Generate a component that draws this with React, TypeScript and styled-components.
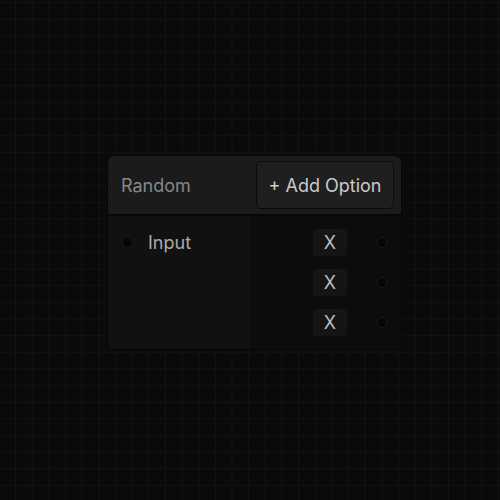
import React from "react";
import styled, { createGlobalStyle } from "styled-components";

const GlobalStyle = createGlobalStyle`
  html, body {
    margin: 0;
    padding: 0;
    background: #0a0a0a;
  }
  body {
    font-family: Inter, "Liberation Sans", sans-serif;
  }
`;

const Canvas = styled.div`
  position: relative;
  width: 500px;
  height: 500px;
  overflow: hidden;
  background-color: #0a0a0a;
  background-image:
    linear-gradient(to right, #121212 1px, transparent 1px),
    linear-gradient(to bottom, #121212 1px, transparent 1px);
  background-size: 16.667px 16.667px;
  background-position: 15px 2px;
`;

const Node = styled.div`
  position: absolute;
  left: 107px;
  top: 155px;
  width: 295px;
  height: 195px;
  box-sizing: border-box;
  border: 1px solid #050505;
  border-radius: 7px;
  overflow: hidden;
  display: flex;
  flex-direction: column;
  background: #0c0c0c;
  box-shadow: 0 0 0 1px #0d0d0d;
`;

const Header = styled.div`
  height: 60px;
  box-sizing: border-box;
  flex: none;
  display: flex;
  align-items: center;
  justify-content: space-between;
  padding: 0 7px 0 13px;
  background: #1b1b1b;
  border-bottom: 2px solid #070707;
`;

const Title = styled.span`
  font-size: 18px;
  color: #878787;
`;

const AddButton = styled.button`
  width: 138px;
  height: 48px;
  box-sizing: border-box;
  border: 1px solid #0b0b0b;
  border-radius: 5px;
  background: #1f1f1f;
  color: #cacaca;
  font-family: inherit;
  font-size: 18px;
  padding: 0;
  cursor: pointer;
`;

const Body = styled.div`
  flex: 1;
  display: grid;
  grid-template-columns: 144px 1fr;
`;

const Column = styled.div<{ $side: "left" | "right" }>`
  display: flex;
  flex-direction: column;
  gap: 13px;
  padding-top: 13px;
  background: ${(p) => (p.$side === "left" ? "#111111" : "#0c0c0c")};
  border-right: ${(p) => (p.$side === "left" ? "1px solid #070707" : "none")};
`;

const Row = styled.div<{ $side: "left" | "right" }>`
  height: 27px;
  display: flex;
  align-items: center;
  justify-content: ${(p) => (p.$side === "left" ? "flex-start" : "flex-end")};
  padding: ${(p) => (p.$side === "left" ? "0 0 0 14px" : "0 14px 0 0")};
`;

const Port = styled.span`
  width: 11px;
  height: 11px;
  box-sizing: border-box;
  border-radius: 50%;
  background: #060606;
  border: 1.5px solid #1a1a1a;
  flex: none;
`;

const InputLabel = styled.span`
  margin-left: 15px;
  font-size: 18px;
  color: #aaaaaa;
`;

const RemoveButton = styled.button`
  width: 34px;
  height: 27px;
  border: none;
  border-radius: 4px;
  background: #151515;
  color: #bdbdbd;
  font-family: inherit;
  font-size: 18px;
  padding: 0;
  margin-right: 29px;
  cursor: pointer;
`;

const options = ["a", "b", "c"];

export default function App() {
  return (
    <>
      <GlobalStyle />
      <Canvas>
        <Node>
          <Header>
            <Title>Random</Title>
            <AddButton>+ Add Option</AddButton>
          </Header>
          <Body>
            <Column $side="left">
              <Row $side="left">
                <Port />
                <InputLabel>Input</InputLabel>
              </Row>
            </Column>
            <Column $side="right">
              {options.map((o) => (
                <Row $side="right" key={o}>
                  <RemoveButton>X</RemoveButton>
                  <Port />
                </Row>
              ))}
            </Column>
          </Body>
        </Node>
      </Canvas>
    </>
  );
}
